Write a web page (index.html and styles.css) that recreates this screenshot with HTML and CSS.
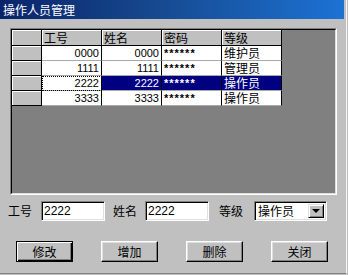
FILE: index.html
```html
<!DOCTYPE html>
<html lang="zh">
<head>
  <meta charset="UTF-8" />
  <title>操作人员管理</title>
  <link rel="stylesheet" href="styles.css">
</head>
<body>
  <div class="window">
    <div class="titlebar">操作人员管理</div>

    <div class="grid-frame">
      <div class="grid-inner">
        <div class="grid">
          <div class="head corner"></div>
          <div class="head">工号</div>
          <div class="head">姓名</div>
          <div class="head">密码</div>
          <div class="head">等级</div>

          <div class="rowhead"></div>
          <div class="cell num">0000</div>
          <div class="cell num">0000</div>
          <div class="cell pwd">******</div>
          <div class="cell">维护员</div>

          <div class="rowhead"></div>
          <div class="cell num">1111</div>
          <div class="cell num">1111</div>
          <div class="cell pwd">******</div>
          <div class="cell">管理员</div>

          <div class="rowhead"></div>
          <div class="cell num focus">2222</div>
          <div class="cell num sel">2222</div>
          <div class="cell pwd sel">******</div>
          <div class="cell sel">操作员</div>

          <div class="rowhead"></div>
          <div class="cell num">3333</div>
          <div class="cell num">3333</div>
          <div class="cell pwd">******</div>
          <div class="cell">操作员</div>
        </div>
      </div>
    </div>

    <div class="form-row">
      <label class="lbl lbl-id">工号</label>
      <div class="field field-id">2222</div>
      <label class="lbl lbl-name">姓名</label>
      <div class="field field-name">2222</div>
      <label class="lbl lbl-level">等级</label>
      <div class="combo">
        <span class="combo-text">操作员</span>
        <span class="combo-btn"><span class="arrow"></span></span>
      </div>
    </div>

    <div class="buttons">
      <button class="btn btn-default">修改</button>
      <button class="btn">增加</button>
      <button class="btn">删除</button>
      <button class="btn">关闭</button>
    </div>
  </div>
</body>
</html>
```

FILE: styles.css
```css
* {
  margin: 0;
  padding: 0;
  box-sizing: border-box;
}

body {
  background: #c0c0c0;
  font-family: "Noto Sans CJK SC", "Liberation Sans", sans-serif;
  font-size: 12px;
  color: #000;
}

.window {
  width: 347px;
  height: 274px;
  border-right: 1px solid #f4f4f4;
  border-bottom: 1px solid #808080;
  background: #c0c0c0;
}

.titlebar {
  height: 19px;
  margin-right: 2px;
  padding-left: 3px;
  line-height: 19px;
  font-size: 12px;
  color: #fff;
  background: linear-gradient(to right, #0a246a, #16498f 45%, #1c72d4);
}

/* grid */
.grid-frame {
  margin: 9px 0 0 10px;
  width: 327px;
  height: 167px;
  border: 1px solid;
  border-color: #808080 #fff #fff #808080;
}

.grid-inner {
  height: 100%;
  border: 1px solid;
  border-color: #000 #dfdfdf #dfdfdf #000;
  background: #808080;
}

.grid {
  display: grid;
  grid-template-columns: 30px 60px 60px 60px 60px;
  grid-template-rows: 16px repeat(4, 15px);
  width: 270px;
}

.head,
.rowhead {
  background: #c0c0c0;
  border-right: 1px solid #000;
  border-bottom: 1px solid #000;
  box-shadow: inset 1px 1px 0 #fff;
  padding-left: 2px;
  line-height: 15px;
}

.rowhead {
  line-height: 14px;
}

.cell {
  background: #fff;
  border-right: 1px solid #000;
  border-bottom: 1px solid #a8a8a8;
  padding: 0 2px;
  line-height: 14px;
  white-space: nowrap;
}

.num {
  text-align: right;
  font-family: "Liberation Sans", sans-serif;
  font-size: 11px;
}

.pwd {
  font-family: "Liberation Sans", sans-serif;
  font-size: 11px;
  font-weight: bold;
  letter-spacing: 1px;
}

.sel {
  background: #000080;
  color: #fff;
}

.focus {
  outline: 1px dotted #000;
  outline-offset: -1px;
}

/* form row */
.form-row {
  display: flex;
  align-items: center;
  height: 20px;
  margin-top: 6px;
  padding-left: 8px;
}

.lbl {
  width: 24px;
  line-height: 20px;
}

.lbl-name { margin-left: 8px; }
.lbl-level { margin-left: 10px; }

.field,
.combo {
  height: 20px;
  background: #fff;
  border: 1px solid;
  border-color: #808080 #fff #fff #808080;
  box-shadow: inset 1px 1px 0 #000, inset -1px -1px 0 #dfdfdf;
}

.field {
  width: 64px;
  margin-left: 9px;
  padding-left: 2px;
  line-height: 18px;
  font-family: "Liberation Sans", sans-serif;
  font-size: 12px;
}

.field-name { margin-left: 8px; }

.combo {
  display: flex;
  width: 73px;
  margin-left: 11px;
  padding: 2px;
  align-items: stretch;
}

.combo-text {
  flex: 1;
  line-height: 14px;
  padding-left: 1px;
}

.combo-btn {
  width: 16px;
  display: flex;
  align-items: center;
  justify-content: center;
  background: #c0c0c0;
  border: 1px solid;
  border-color: #dfdfdf #000 #000 #dfdfdf;
  box-shadow: inset 1px 1px 0 #fff, inset -1px -1px 0 #808080;
}

.arrow {
  width: 0;
  height: 0;
  border-left: 4px solid transparent;
  border-right: 4px solid transparent;
  border-top: 4px solid #000;
}

/* buttons */
.buttons {
  display: flex;
  gap: 28px;
  margin-top: 20px;
  padding-left: 16px;
}

.btn {
  width: 57px;
  height: 21px;
  background: #c0c0c0;
  font-family: "Noto Sans CJK SC", sans-serif;
  font-size: 12px;
  color: #000;
  border: 1px solid;
  border-color: #fff #000 #000 #fff;
  box-shadow: inset -1px -1px 0 #808080, inset 1px 1px 0 #dfdfdf;
  cursor: pointer;
}

.btn-default {
  border-color: #000;
  box-shadow: inset 1px 1px 0 #fff, inset -1px -1px 0 #000, inset -2px -2px 0 #808080;
}
```
